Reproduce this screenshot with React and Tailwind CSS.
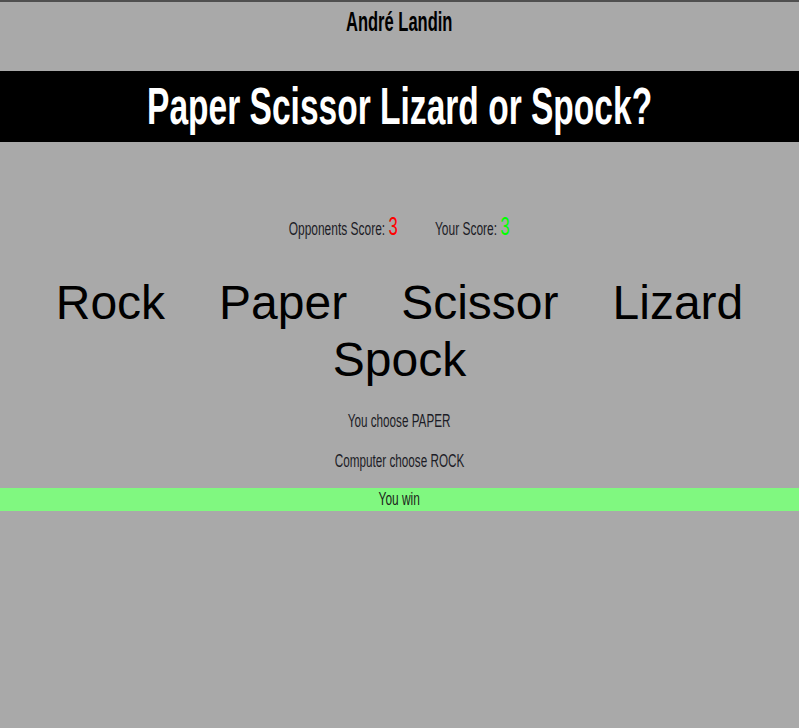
import React from 'react';

// no Oswald offline: Liberation Sans squeezed horizontally stands in for it
const sans = { fontFamily: '"Liberation Sans", Arial, sans-serif' };

const choices = ['Rock', 'Paper', 'Scissor', 'Lizard', 'Spock'];

export default function App() {
  return (
    <div className="min-h-[728px] bg-[#a9a9a9] border-t-2 border-[#505050] text-center" style={sans}>
      <header className="h-[69px] pt-[6px]">
        <span className="inline-block scale-x-[0.59] text-[28px] leading-[28px] font-bold text-black">André Landin</span>
      </header>

      <h1 className="bg-black h-[71px]">
        <span className="inline-block scale-x-[0.645] text-[52px] leading-[71px] font-bold text-white">
          Paper Scissor Lizard or Spock?
        </span>
      </h1>

      <div className="mt-[69px] h-[30px]">
        <div className="inline-block scale-x-[0.665] text-[18px] leading-[30px] text-[#1c1c26]">
          <span>
            Opponents Score: <span className="text-[25px] text-[#ff0000]">3</span>
          </span>
          <span className="ml-[56px]">
            Your Score: <span className="text-[25px] text-[#00ff00]">3</span>
          </span>
        </div>
      </div>

      <div className="mt-[33px] text-[48px] leading-[57px] text-black">
        {choices.map((c) => (
          <span key={c} className="inline-block mx-[27px] cursor-pointer">{c}</span>
        ))}
      </div>

      <p className="mt-[21px] h-[24px]">
        <span className="inline-block scale-x-[0.65] text-[18px] leading-[24px] text-[#1c1c26]">You choose PAPER</span>
      </p>
      <p className="mt-[16px] h-[24px]">
        <span className="inline-block scale-x-[0.65] text-[18px] leading-[24px] text-[#1c1c26]">Computer choose ROCK</span>
      </p>
      <div className="mt-[15px] bg-[#80f880] h-[23px]">
        <span className="inline-block scale-x-[0.66] text-[18px] leading-[23px] text-[#1c261c]">You win</span>
      </div>
    </div>
  );
}
